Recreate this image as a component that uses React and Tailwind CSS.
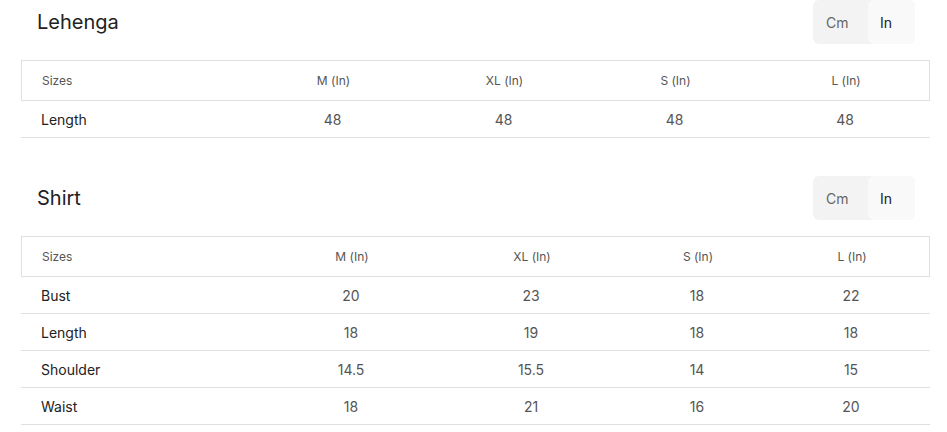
import React from "react";

const charts = [
    {
        title: "Lehenga",
        cols: "grid-cols-[226px_171px_171px_171px_170px]",
        sizes: ["M (In)", "XL (In)", "S (In)", "L (In)"],
        rows: [["Length", "48", "48", "48", "48"]],
    },
    {
        title: "Shirt",
        cols: "grid-cols-[241px_178px_182px_150px_158px]",
        sizes: ["M (In)", "XL (In)", "S (In)", "L (In)"],
        rows: [
            ["Bust", "20", "23", "18", "22"],
            ["Length", "18", "19", "18", "18"],
            ["Shoulder", "14.5", "15.5", "14", "15"],
            ["Waist", "18", "21", "16", "20"],
        ],
    },
];

const UnitToggle = () => (
    <div className="flex h-[44px] rounded-md bg-[#f3f3f3] text-[14px]">
        <button className="w-[55px] pl-[13px] text-left text-[#666]">Cm</button>
        <button className="w-[47px] pl-3 text-left rounded-md bg-[#f9f9f9] text-[#222]">In</button>
    </div>
);

const SizeChart = ({chart}) => (
    <section>
        <div className="flex items-center justify-between pl-4 pr-[15px]">
            <h2 className="text-[20px] text-[#222]">{chart.title}</h2>
            <UnitToggle/>
        </div>
        <div className="mt-4">
            <div className={`grid ${chart.cols} h-[41px] items-center border border-[#e0e0e0] text-[12px] text-[#555]`}>
                <div className="pl-5">Sizes</div>
                {chart.sizes.map((s) => (
                    <div key={s} className="text-center">{s}</div>
                ))}
            </div>
            {chart.rows.map((row) => (
                <div key={row[0]} className={`grid ${chart.cols} h-[37px] items-center border-b border-[#e0e0e0] text-[14px]`}>
                    <div className="pl-5 text-[#222]">{row[0]}</div>
                    {row.slice(1).map((v, i) => (
                        <div key={i} className="text-center text-[#555]">{v}</div>
                    ))}
                </div>
            ))}
        </div>
    </section>
);

export default function App() {
    return (
        <div className="w-[947px] h-[432px] overflow-hidden bg-white pl-[21px] pr-[17px] font-['Inter',sans-serif]">
            <div className="flex flex-col gap-[38px]">
                {charts.map((c) => (
                    <SizeChart key={c.title} chart={c}/>
                ))}
            </div>
        </div>
    );
}
